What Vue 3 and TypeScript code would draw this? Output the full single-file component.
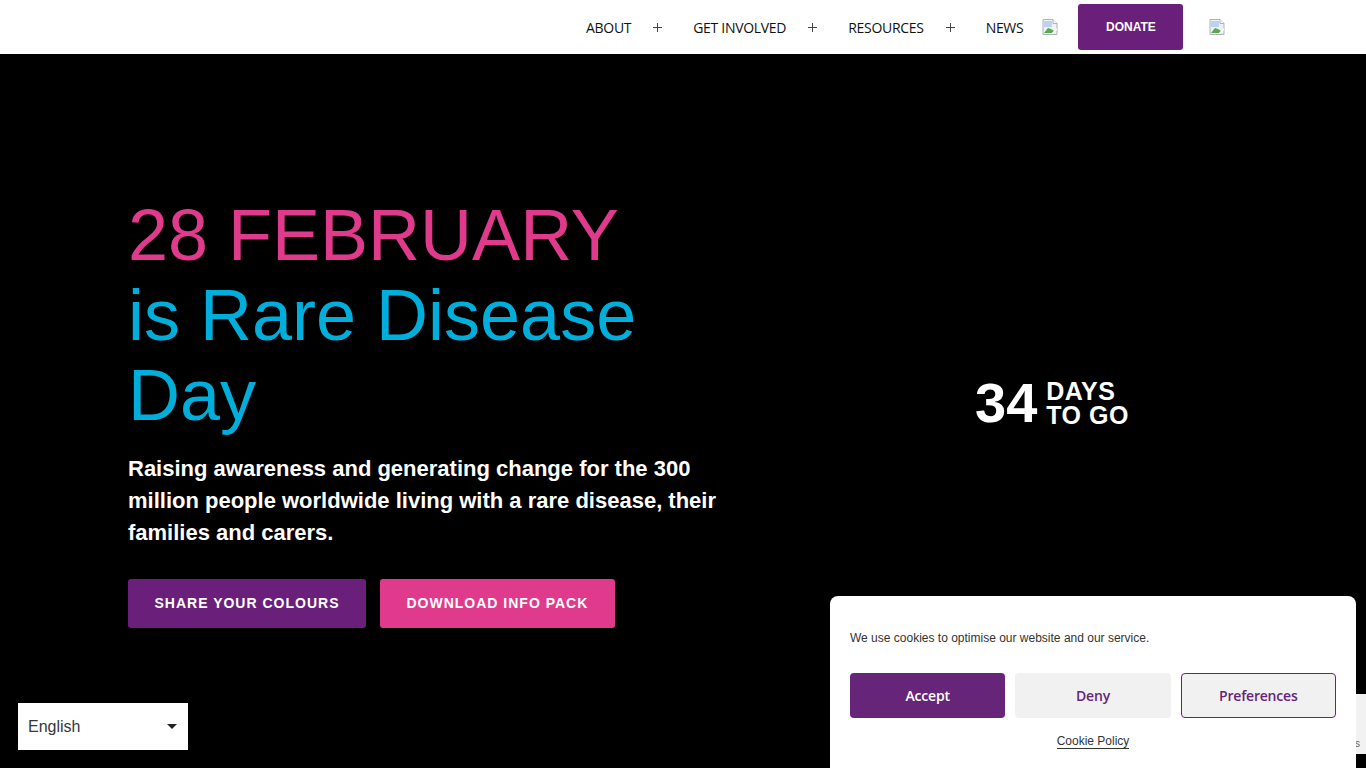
<script setup lang="ts">
const navItems = [
  { label: 'ABOUT', plus: true },
  { label: 'GET INVOLVED', plus: true },
  { label: 'RESOURCES', plus: true },
  { label: 'NEWS', plus: false },
]
</script>

<template>
  <div class="page">
    <header class="topbar">
      <nav class="nav">
        <template v-for="item in navItems" :key="item.label">
          <a class="nav-link">{{ item.label }}</a>
          <span v-if="item.plus" class="plus"></span>
        </template>
      </nav>
      <svg class="broken first" width="16" height="16" viewBox="0 0 16 16">
        <path d="M1 .5h10l4 4v11H1z" fill="#eef2f6" stroke="#a9b4bd" />
        <path d="M11 .5v4h4" fill="#fff" stroke="#a9b4bd" />
        <path d="M2 2h8v6H2z" fill="#bcd2ee" />
        <path d="M2 14l4-5 3 1 3 2-2 2z" fill="#5da84a" />
        <path d="M9 15l6-6v2l-4 4z" fill="#fff" />
      </svg>
      <a class="donate">DONATE</a>
      <svg class="broken last" width="16" height="16" viewBox="0 0 16 16">
        <path d="M1 .5h10l4 4v11H1z" fill="#eef2f6" stroke="#a9b4bd" />
        <path d="M11 .5v4h4" fill="#fff" stroke="#a9b4bd" />
        <path d="M2 2h8v6H2z" fill="#bcd2ee" />
        <path d="M2 14l4-5 3 1 3 2-2 2z" fill="#5da84a" />
        <path d="M9 15l6-6v2l-4 4z" fill="#fff" />
      </svg>
    </header>

    <main class="hero">
      <section class="intro">
        <h1 class="headline">
          <span class="pink">28 FEBRUARY</span><br />
          <span class="blue">is Rare Disease Day</span>
        </h1>
        <p class="lead">
          Raising awareness and generating change for the 300 million people worldwide living with a rare disease, their families and carers.
        </p>
        <div class="actions">
          <a class="btn purple">SHARE YOUR COLOURS</a>
          <a class="btn magenta">DOWNLOAD INFO PACK</a>
        </div>
      </section>
      <aside class="countdown">
        <span class="count">34</span>
        <span class="count-label">DAYS<br />TO GO</span>
      </aside>
    </main>

    <div class="lang">
      <span>English</span>
      <i class="caret"></i>
    </div>

    <div class="recaptcha"><span>s</span></div>

    <div class="cookie">
      <p class="cookie-text">We use cookies to optimise our website and our service.</p>
      <div class="cookie-buttons">
        <button class="cbtn accept">Accept</button>
        <button class="cbtn deny">Deny</button>
        <button class="cbtn prefs">Preferences</button>
      </div>
      <a class="policy">Cookie Policy</a>
    </div>
  </div>
</template>

<style>
html,
body {
  margin: 0;
  background: #000;
  overflow: hidden;
}
</style>

<style scoped>
.page {
  height: 768px;
  display: flex;
  flex-direction: column;
  font-family: 'Liberation Sans', Arial, sans-serif;
  overflow: hidden;
}

.topbar {
  height: 54px;
  flex: none;
  background: #fff;
  display: flex;
  align-items: center;
  padding-left: 586px;
  box-sizing: border-box;
}

.nav {
  display: flex;
  align-items: center;
}

.nav-link {
  font-family: 'Open Sans', sans-serif;
  font-size: 14px;
  font-weight: 500;
  color: #111;
  letter-spacing: -0.3px;
}

.plus {
  position: relative;
  width: 9px;
  height: 9px;
  margin: 0 31px 0 22px;
  background:
    linear-gradient(#444, #444) center / 9px 1px no-repeat,
    linear-gradient(#444, #444) center / 1px 9px no-repeat;
}

.broken {
  flex: none;
}

.broken.first {
  margin-left: 19px;
}

.broken.last {
  margin-left: 26px;
}

.donate {
  width: 105px;
  height: 46px;
  margin-left: 20px;
  background: #6a1f7a;
  color: #fff;
  border-radius: 3px;
  display: flex;
  align-items: center;
  justify-content: center;
  font-size: 12px;
  font-weight: 700;
}

.hero {
  flex: 1;
  background: #000;
  display: flex;
  align-items: center;
  padding-left: 128px;
}

.intro {
  width: 600px;
  flex: none;
}

.headline {
  margin: 0;
  font-size: 72px;
  font-weight: 400;
  line-height: 80px;
}

.pink {
  color: #e03a8c;
}

.blue {
  color: #00aedb;
}

.lead {
  margin: 18px 0 0;
  color: #fff;
  font-size: 22px;
  font-weight: 700;
  line-height: 32px;
}

.actions {
  display: flex;
  gap: 14px;
  margin-top: 30px;
}

.btn {
  height: 49px;
  padding: 0 26.5px;
  border-radius: 3px;
  color: #fff;
  display: flex;
  align-items: center;
  font-size: 14px;
  font-weight: 700;
  letter-spacing: 1px;
}

.btn.purple {
  background: #6a1f7a;
}

.btn.magenta {
  background: #e03a8c;
}

.countdown {
  display: flex;
  align-items: center;
  gap: 9px;
  margin-left: 247px;
  margin-top: -16px;
  color: #fff;
  font-weight: 700;
}

.count {
  font-size: 56px;
  line-height: 56px;
}

.count-label {
  font-size: 25px;
  line-height: 24px;
  letter-spacing: 0.5px;
}

.lang {
  position: fixed;
  left: 18px;
  top: 703px;
  width: 170px;
  height: 47px;
  background: #fff;
  color: #32373c;
  font-size: 16px;
  display: flex;
  align-items: center;
  justify-content: space-between;
  padding: 0 11px 0 10px;
  box-sizing: border-box;
}

.caret {
  border-left: 5px solid transparent;
  border-right: 5px solid transparent;
  border-top: 5px solid #222;
}

.recaptcha {
  position: fixed;
  right: 0;
  top: 694px;
  width: 60px;
  height: 60px;
  background: #f2f2f2;
  color: #666;
  font-size: 10px;
  text-align: right;
}

.recaptcha span {
  position: absolute;
  right: 6px;
  top: 44px;
}

.cookie {
  position: fixed;
  left: 830px;
  top: 596px;
  width: 526px;
  height: 172px;
  box-sizing: border-box;
  padding: 0 20px;
  background: #fff;
  border-radius: 8px 8px 0 0;
  display: flex;
  flex-direction: column;
  align-items: center;
}

.cookie-text {
  align-self: flex-start;
  margin: 35px 0 0;
  font-size: 12px;
  line-height: 15px;
  color: #333;
}

.cookie-buttons {
  display: grid;
  grid-template-columns: repeat(3, 1fr);
  gap: 10px;
  width: 100%;
  margin-top: 27px;
}

.cbtn {
  height: 45px;
  border-radius: 4px;
  border: 1px solid transparent;
  font-family: 'Open Sans', sans-serif;
  font-size: 14px;
  font-weight: 600;
  letter-spacing: -0.2px;
  padding: 0;
}

.accept {
  background: #662579;
  color: #fff;
}

.deny {
  background: #f1f1f1;
  color: #662579;
}

.prefs {
  background: #f1f1f1;
  color: #662579;
  border-color: #662579;
}

.policy {
  margin-top: 16px;
  font-size: 12px;
  line-height: 14px;
  color: #333;
  border-bottom: 1px solid #333;
}
</style>
